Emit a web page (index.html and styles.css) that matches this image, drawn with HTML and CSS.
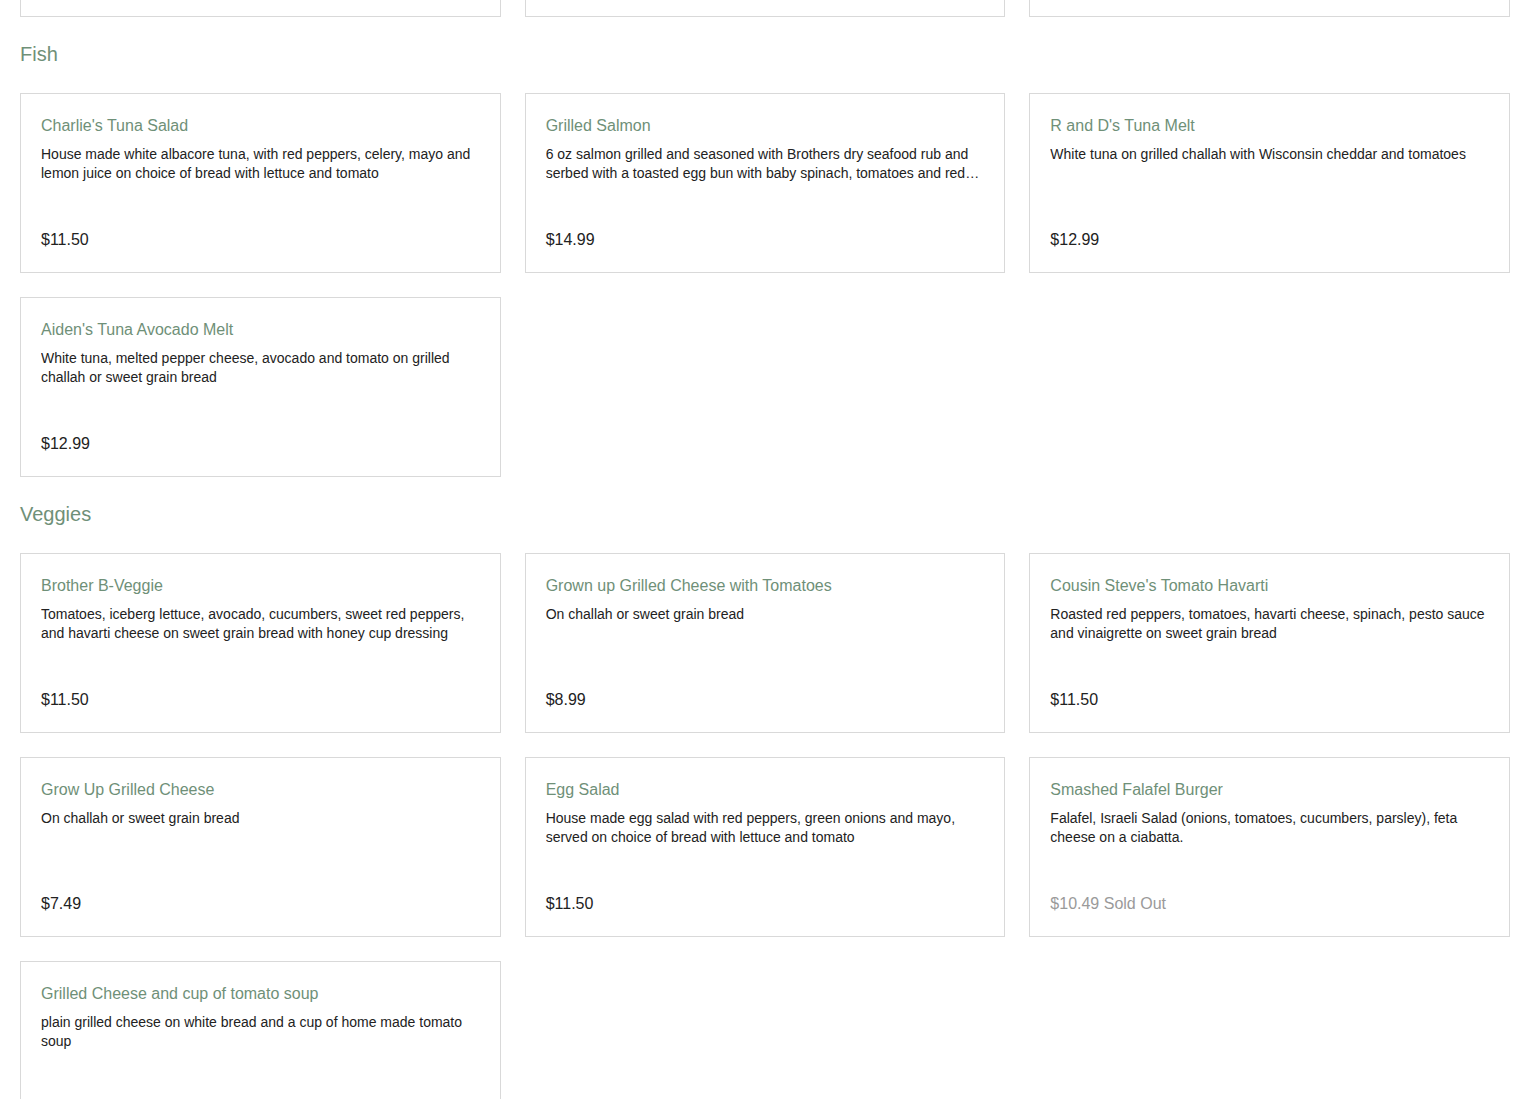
FILE: index.html
```html
<!DOCTYPE html>
<html>
<head>
<meta charset="utf-8">
<link rel="stylesheet" href="styles.css">
</head>
<body>
<div class="menu">
  <section class="section section-prev">
    <div class="grid">
      <div class="card"></div>
      <div class="card"></div>
      <div class="card"></div>
    </div>
  </section>

  <section class="section">
    <h2 class="section-title">Fish</h2>
    <div class="grid">
      <div class="card">
        <h3 class="item-name">Charlie's Tuna Salad</h3>
        <p class="item-desc">House made white albacore tuna, with red peppers, celery, mayo and lemon juice on choice of bread with lettuce and tomato</p>
        <div class="item-price">$11.50</div>
      </div>
      <div class="card">
        <h3 class="item-name">Grilled Salmon</h3>
        <p class="item-desc">6 oz salmon grilled and seasoned with Brothers dry seafood rub and serbed with a toasted egg bun with baby spinach, tomatoes and red onions with a side of house made tartar sauce</p>
        <div class="item-price">$14.99</div>
      </div>
      <div class="card">
        <h3 class="item-name">R and D's Tuna Melt</h3>
        <p class="item-desc">White tuna on grilled challah with Wisconsin cheddar and tomatoes</p>
        <div class="item-price">$12.99</div>
      </div>
      <div class="card">
        <h3 class="item-name">Aiden's Tuna Avocado Melt</h3>
        <p class="item-desc">White tuna, melted pepper cheese, avocado and tomato on grilled challah or sweet grain bread</p>
        <div class="item-price">$12.99</div>
      </div>
    </div>
  </section>

  <section class="section">
    <h2 class="section-title">Veggies</h2>
    <div class="grid">
      <div class="card">
        <h3 class="item-name">Brother B-Veggie</h3>
        <p class="item-desc">Tomatoes, iceberg lettuce, avocado, cucumbers, sweet red peppers, and havarti cheese on sweet grain bread with honey cup dressing</p>
        <div class="item-price">$11.50</div>
      </div>
      <div class="card">
        <h3 class="item-name">Grown up Grilled Cheese with Tomatoes</h3>
        <p class="item-desc">On challah or sweet grain bread</p>
        <div class="item-price">$8.99</div>
      </div>
      <div class="card">
        <h3 class="item-name">Cousin Steve's Tomato Havarti</h3>
        <p class="item-desc">Roasted red peppers, tomatoes, havarti cheese, spinach, pesto sauce and vinaigrette on sweet grain bread</p>
        <div class="item-price">$11.50</div>
      </div>
      <div class="card">
        <h3 class="item-name">Grow Up Grilled Cheese</h3>
        <p class="item-desc">On challah or sweet grain bread</p>
        <div class="item-price">$7.49</div>
      </div>
      <div class="card">
        <h3 class="item-name">Egg Salad</h3>
        <p class="item-desc">House made egg salad with red peppers, green onions and mayo, served on choice of bread with lettuce and tomato</p>
        <div class="item-price">$11.50</div>
      </div>
      <div class="card">
        <h3 class="item-name">Smashed Falafel Burger</h3>
        <p class="item-desc">Falafel, Israeli Salad (onions, tomatoes, cucumbers, parsley), feta cheese on a ciabatta.</p>
        <div class="item-price sold-out">$10.49 Sold Out</div>
      </div>
      <div class="card">
        <h3 class="item-name">Grilled Cheese and cup of tomato soup</h3>
        <p class="item-desc">plain grilled cheese on white bread and a cup of home made tomato soup</p>
        <div class="item-price">$10.99</div>
      </div>
    </div>
  </section>
</div>
</body>
</html>
```

FILE: styles.css
```css
html, body {
  margin: 0;
  padding: 0;
  background: #ffffff;
}

body {
  font-family: "Liberation Sans", Arial, Helvetica, sans-serif;
  color: #222222;
  overflow: hidden;
}

.menu {
  padding: 0 20px;
}

.section-prev {
  margin-top: -163px;
}

.section-title {
  margin: 25px 0 27px;
  font-size: 20px;
  line-height: 24px;
  font-weight: normal;
  color: #6f9078;
}

.grid {
  display: grid;
  grid-template-columns: repeat(3, 1fr);
  column-gap: 24px;
  row-gap: 24px;
}

.card {
  box-sizing: border-box;
  height: 180px;
  border: 1px solid #d9d9d9;
  padding: 21px 20px 21px;
  display: flex;
  flex-direction: column;
}

.item-name {
  margin: 0;
  font-size: 16px;
  line-height: 22px;
  font-weight: normal;
  color: #6f9078;
}

.item-desc {
  margin: 8px 0 0;
  font-size: 14px;
  line-height: 19px;
  color: #222222;
  display: -webkit-box;
  -webkit-line-clamp: 2;
  -webkit-box-orient: vertical;
  overflow: hidden;
}

.item-price {
  margin-top: auto;
  font-size: 16px;
  line-height: 22px;
  color: #222222;
}

.item-price.sold-out {
  color: #9a9a9a;
}
```
